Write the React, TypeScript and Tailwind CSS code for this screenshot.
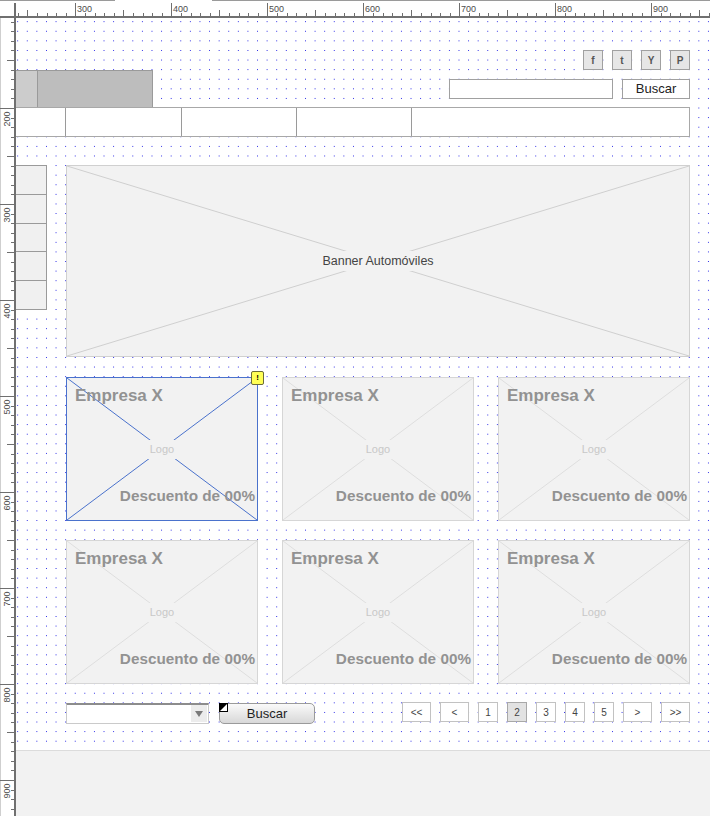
import clsx from 'clsx'

const STEP = 9.6

function TopRuler() {
  const ticks = []
  for (let k = -6; 75.3 + k * STEP < 710; k++) {
    const x = Math.round(75.3 + k * STEP) + 0.5
    const u = 300 + k * 10
    const y1 = u % 100 === 0 ? 3 : u % 50 === 0 ? 10 : 13
    ticks.push(
      <g key={k}>
        <line x1={x} x2={x} y1={y1} y2={16} stroke="#6f6f6f" strokeWidth="1" />
        {u % 100 === 0 && (
          <text x={x + 1.5} y={12} fontSize="9" fill="#4d4d4d">
            {u}
          </text>
        )}
      </g>
    )
  }
  return (
    <svg width="710" height="18" className="block shrink-0">
      <rect width="710" height="18" fill="#ffffff" />
      <line x1="0" x2="115" y1="0.5" y2="0.5" stroke="#9a9a9a" />
      <line x1="212" x2="710" y1="0.5" y2="0.5" stroke="#9a9a9a" />
      <line x1="15" x2="15" y1="3" y2="18" stroke="#6f6f6f" strokeWidth="2" />
      {ticks}
      <rect x="0" y="16" width="710" height="2" fill="#707070" />
    </svg>
  )
}

function SideRuler() {
  const ticks = []
  for (let k = -9; 108 + k * STEP < 816; k++) {
    const y = Math.round(108 + k * STEP) - 18 + 0.5
    const u = 200 + k * 10
    const x1 = u % 100 === 0 ? 0 : u % 50 === 0 ? 7 : 11
    ticks.push(
      <g key={k}>
        <line x1={x1} x2={14} y1={y} y2={y} stroke="#6f6f6f" strokeWidth="1" />
        {u % 100 === 0 && (
          <text transform={`translate(9.5 ${y + 18}) rotate(-90)`} fontSize="9" fill="#4d4d4d">
            {u}
          </text>
        )}
      </g>
    )
  }
  return (
    <svg width="16" height="798" className="block shrink-0">
      <rect width="16" height="798" fill="#ffffff" />
      <line x1="0.5" x2="0.5" y1="0" y2="798" stroke="#cfcfcf" />
      {ticks}
      <rect x="14" y="0" width="2" height="798" fill="#707070" />
    </svg>
  )
}

function Cross({ color }: { color: string }) {
  return (
    <svg className="absolute inset-0 h-full w-full" viewBox="0 0 100 100" preserveAspectRatio="none">
      <line x1="0" y1="0" x2="100" y2="100" stroke={color} strokeWidth="1" vectorEffect="non-scaling-stroke" />
      <line x1="100" y1="0" x2="0" y2="100" stroke={color} strokeWidth="1" vectorEffect="non-scaling-stroke" />
    </svg>
  )
}

function Card({ selected }: { selected?: boolean }) {
  return (
    <div
      className={clsx(
        'relative grid h-[144px] grid-rows-[1fr_auto_1fr] border bg-[#f2f2f2]',
        selected ? 'border-[#4a72cc]' : 'border-[#d6d6d6]'
      )}
    >
      <Cross color={selected ? '#4a72cc' : '#dedede'} />
      <span className="relative self-start pl-[8px] pt-[8px] text-[17px] font-bold leading-[20px] text-[#929292]">
        Empresa X
      </span>
      <span className="relative justify-self-center bg-[#f2f2f2] px-[2px] text-[11px] leading-[19px] text-[#c8c8c8]">
        Logo
      </span>
      <span className="relative self-end justify-self-end pb-[16px] pr-[2px] text-[15.3px] font-bold leading-[17px] text-[#929292]">
        Descuento de 00%
      </span>
      {selected && (
        <span className="absolute -right-[7px] -top-[7px] flex h-[14px] w-[13px] items-center justify-center rounded-[2px] border border-[#6b6b3a] bg-[#ffff55] text-[8px] font-bold leading-none text-black">
          !
        </span>
      )}
    </div>
  )
}

const pages = ['<<', '<', '1', '2', '3', '4', '5', '>', '>>']

export default function App() {
  return (
    <div className="flex h-[816px] w-[710px] flex-col overflow-hidden bg-white font-['Liberation_Sans',Arial,sans-serif]">
      <TopRuler />
      <div className="flex flex-1">
        <SideRuler />
        <div className="flex flex-1 flex-col">
          {/* dotted grid: blue shows only where both 1px stripes are open */}
          <div className="h-[732px] bg-[#2626e6] bg-[linear-gradient(90deg,transparent_1.1px,#ffffff_1.1px),linear-gradient(180deg,transparent_1.1px,#ffffff_1.1px)] bg-[length:9.6px_9.6px] bg-[position:1.2px_3.2px]">
            {/* header */}
            <div className="flex justify-between pr-[20px]">
              <div className="mt-[52px] flex h-[37px] border-r border-t border-[#9a9a9a]">
                <div className="w-[22px] border-r border-[#9a9a9a] bg-[#cccccc]" />
                <div className="w-[114px] bg-[#bdbdbd]" />
              </div>
              <div className="flex flex-col items-end gap-[9px] pt-[32px]">
                <div className="flex gap-[9px]">
                  {['f', 't', 'Y', 'P'].map((s) => (
                    <div
                      key={s}
                      className="flex h-[20px] w-[20px] items-center justify-center border border-[#a0a0a0] bg-[#e6e6e6] text-[10px] font-bold text-[#555]"
                    >
                      {s}
                    </div>
                  ))}
                </div>
                <div className="flex gap-[9px]">
                  <div className="h-[20px] w-[164px] border border-[#a0a0a0] bg-white" />
                  <div className="flex h-[20px] w-[68px] items-center justify-center border border-[#a0a0a0] bg-white text-[13px] text-[#222]">
                    Buscar
                  </div>
                </div>
              </div>
            </div>

            {/* nav */}
            <div className="mr-[20px] flex h-[30px] border-y border-r border-[#a8a8a8] bg-white">
              <div className="w-[50px] border-r border-[#9a9a9a]" />
              <div className="w-[116px] border-r border-[#9a9a9a]" />
              <div className="w-[115px] border-r border-[#9a9a9a]" />
              <div className="w-[115px] border-r border-[#9a9a9a]" />
              <div className="flex-1" />
            </div>

            {/* sidebar + banner */}
            <div className="mr-[20px] mt-[28px] flex items-start gap-[19px]">
              <div className="flex h-[145px] w-[31px] flex-col border-y border-r border-[#9a9a9a] bg-[#f0f0f0]">
                <div className="flex-1 border-b border-[#9a9a9a]" />
                <div className="flex-1 border-b border-[#9a9a9a]" />
                <div className="flex-1 border-b border-[#9a9a9a]" />
                <div className="flex-1 border-b border-[#9a9a9a]" />
                <div className="flex-1" />
              </div>
              <div className="relative flex h-[192px] flex-1 items-center justify-center border border-[#d0d0d0] bg-[#f2f2f2]">
                <Cross color="#cfcfcf" />
                <span className="relative bg-[#f2f2f2] px-[8px] text-[12.5px] leading-[20px] text-[#444]">
                  Banner Automóviles
                </span>
              </div>
            </div>

            {/* cards */}
            <div className="ml-[50px] mr-[20px] mt-[20px] grid grid-cols-3 gap-x-[24px] gap-y-[19px]">
              <Card selected />
              <Card />
              <Card />
              <Card />
              <Card />
              <Card />
            </div>

            {/* bottom bar */}
            <div className="ml-[50px] mr-[20px] mt-[19px] flex items-start justify-between">
              <div className="flex gap-[10px]">
                <div className="flex h-[21px] w-[143px] border border-t-2 border-[#cacaca] border-t-[#8c8c8c] bg-white">
                  <div className="flex-1" />
                  <div className="mb-px mr-px flex w-[16px] items-center justify-center bg-[#ececec]">
                    <svg width="8" height="6" viewBox="0 0 8 6">
                      <polygon points="0,0 8,0 4,6" fill="#7a7a7a" />
                    </svg>
                  </div>
                </div>
                <div className="relative flex h-[21px] w-[96px] items-center justify-center rounded-[5px] border border-[#9a9a9a] bg-linear-to-b from-[#fafafa] to-[#d8d8d8] text-[13px] text-[#1e1e1e]">
                  <svg width="9" height="9" viewBox="0 0 9 9" className="absolute -left-px -top-px">
                    <rect x="0.5" y="0.5" width="8" height="8" fill="#ffffff" stroke="#000" />
                    <polygon points="0,0 9,0 0,9" fill="#000" />
                  </svg>
                  Buscar
                </div>
              </div>
              <div className="-mt-px flex gap-[9px]">
                {pages.map((p) => (
                  <div
                    key={p}
                    className={clsx(
                      'flex h-[20px] items-center justify-center border text-[10px] text-[#444]',
                      p.length > 1 || p === '<' || p === '>' ? 'w-[29px]' : 'w-[20px]',
                      p === '2' ? 'border-[#a8a8a8] bg-[#e2e2e2]' : 'border-[#c2c2c2] bg-white'
                    )}
                  >
                    {p}
                  </div>
                ))}
              </div>
            </div>
          </div>
          <div className="flex-1 border-t border-[#dcdcdc] bg-[#f2f2f2]" />
        </div>
      </div>
    </div>
  )
}
